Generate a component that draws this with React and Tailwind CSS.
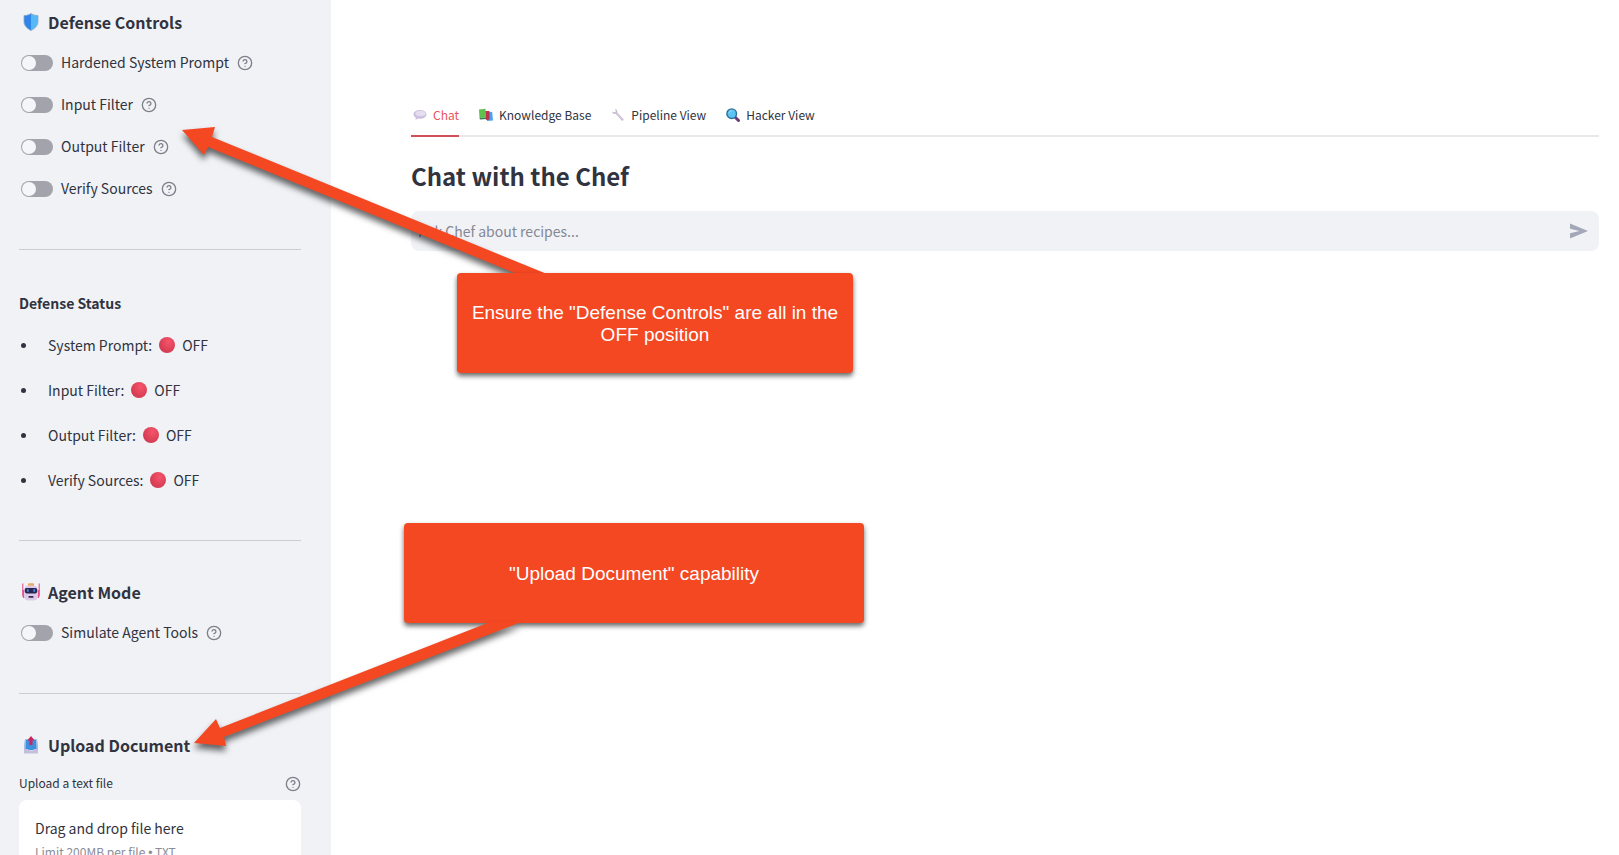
import React, { useState } from 'react';
import { CircleHelp } from 'lucide-react';

const defenses = [
  { id: 'prompt', label: 'Hardened System Prompt', status: 'System Prompt' },
  { id: 'input', label: 'Input Filter', status: 'Input Filter' },
  { id: 'output', label: 'Output Filter', status: 'Output Filter' },
  { id: 'sources', label: 'Verify Sources', status: 'Verify Sources' },
];

const ShieldIcon = () => (
  <svg width="16" height="18" viewBox="0 0 16 18" aria-hidden="true">
    <path d="M8 0.5C6 2 3.500 2.500 1 2.500v6c0 4 3 7 7 9z" fill="#2f86e8" />
    <path d="M8 0.500c2 1.500 4.500 2 7 2v6c0 4-3 7-7 9z" fill="#55b9f8" />
    <path d="M8 0.500C6 2 3.500 2.500 1 2.500v6c0 4 3 7 7 9 4-2 7-5 7-9v-6c-2.500 0-5-.500-7-2z" fill="none" stroke="#8aa6c4" strokeWidth="0.800" />
  </svg>
);

const RobotIcon = () => (
  <svg width="18" height="18" viewBox="0 0 18 18" aria-hidden="true">
    <path d="M0.800 0.500v13M17.200 0.500v13" stroke="#e0457f" strokeWidth="1" />
    <path d="M0.500 7h2v8h-1.500zM15.500 7h2l-.500 8h-1.500z" fill="#e8528c" />
    <rect x="6" y="0.300" width="6" height="3" rx="1" fill="#eda85a" />
    <rect x="2" y="2.500" width="14" height="15" rx="4.500" fill="#dccbe8" />
    <rect x="2.800" y="5" width="12.400" height="5.400" rx="1.800" fill="#2b2450" />
    <rect x="4.800" y="6" width="2" height="3" rx="1" fill="#3f83e0" />
    <rect x="11.200" y="6" width="2" height="3" rx="1" fill="#3f83e0" />
    <rect x="6.500" y="13" width="5" height="1.800" rx="0.600" fill="#3b2b52" />
  </svg>
);

const OutboxIcon = () => (
  <svg width="16" height="18" viewBox="0 0 16 18" aria-hidden="true">
    <path d="M2 3.500h12l1 10.500H1z" fill="#3d8fe0" />
    <path d="M2 3.500h1l-.500 10H1zM13 3.500h1l1 10h-1.500z" fill="#b5c3e4" />
    <path d="M1 13h4l1.500 1.500h3L11 13h4v4.500H1z" fill="#c3bedb" />
    <path d="M8 0l3.800 4.500H9.500V9h-3V4.500H4.200z" fill="#c9285f" />
  </svg>
);

const SpeechIcon = () => (
  <svg width="14" height="14" viewBox="0 0 14 14" aria-hidden="true">
    <path d="M7 2c3.800 0 6.500 1.800 6.500 4.300S10.800 10.800 7 10.800c-.700 0-1.400 0-2-.200L2.500 12l.300-2.200C1.300 9 .500 7.700.500 6.300.500 3.800 3.200 2 7 2z" fill="#cdc0de" />
    <ellipse cx="7.500" cy="5.500" rx="5" ry="2.800" fill="#e6def0" />
  </svg>
);

const BooksIcon = () => (
  <svg width="14" height="14" viewBox="0 0 14 14" aria-hidden="true">
    <path d="M7.500 4h5.700l.800 8.500-6 .500z" fill="#4fa3ee" />
    <path d="M6 3h4.500v8.500L7 12z" fill="#c2304f" />
    <path d="M0 1.500L6.500.800l.500 8.700-6.500.500z" fill="#5fc24e" />
    <path d="M.500 10L7 9.500l.500 1.500-6.500.500z" fill="#3a7a54" />
  </svg>
);

const WrenchIcon = () => (
  <svg width="14" height="14" viewBox="0 0 14 14" aria-hidden="true">
    <path d="M1 3.200c.200 2 1.900 3.200 3.600 2.600l6 6.600c1.300 1 2.600-.300 1.600-1.600L6.300 4.600C6.800 2.700 5.500 1 3.700 1l1.300 2-1 1.300L1.700 4z" fill="#c8bcd2" />
    <path d="M6 5.500l5 5.500" stroke="#e4dcea" strokeWidth="0.800" />
  </svg>
);

const SearchIcon = () => (
  <svg width="14" height="14" viewBox="0 0 14 14" aria-hidden="true">
    <path d="M9.500 9.500l3 3" stroke="#6b3b78" strokeWidth="3" strokeLinecap="round" />
    <circle cx="5.700" cy="5.700" r="4.800" fill="#5cc5f5" stroke="#2d6f96" strokeWidth="1.400" />
    <path d="M3 5c.500-1.300 1.300-2 2.500-2.200" stroke="#a5e4ff" strokeWidth="1" fill="none" />
  </svg>
);

const tabs = [
  { id: 'chat', label: 'Chat', icon: SpeechIcon },
  { id: 'kb', label: 'Knowledge Base', icon: BooksIcon },
  { id: 'pipeline', label: 'Pipeline View', icon: WrenchIcon },
  { id: 'hacker', label: 'Hacker View', icon: SearchIcon },
];

const HelpButton = ({ topic }) => (
  <button type="button" aria-label={`Help: ${topic}`} className="flex text-[#7d808b]">
    <CircleHelp size={16} />
  </button>
);

const Toggle = ({ id, label, checked, onChange }) => (
  <div className="flex h-[22px] items-center gap-2 pl-[2px]">
    <label htmlFor={id} className="flex items-center gap-2">
      <input
        id={id}
        type="checkbox"
        role="switch"
        checked={checked}
        onChange={onChange}
        className="peer sr-only"
      />
      <span className="flex h-4 w-8 items-center rounded-full bg-[#a3a4ab] px-px peer-checked:justify-end peer-checked:bg-[#ff4b4b]">
        <span className="size-[14px] rounded-full bg-[#f5f6f9]" />
      </span>
      <span className="pb-[2px]">{label}</span>
    </label>
    <HelpButton topic={label} />
  </div>
);

const SectionTitle = ({ icon: Icon, children }) => (
  <h2 className="flex h-6 items-center gap-[5px] text-[16px] font-bold">
    <span className="flex w-6 justify-center">
      <Icon />
    </span>
    {children}
  </h2>
);

const Divider = () => <hr className="border-t border-[#cccdd4]" />;

const Sidebar = ({ enabled, toggle }) => (
  <aside className="w-[331px] shrink-0 overflow-hidden bg-[#f0f2f6] pt-[10px] pr-[30px] pl-[19px]">
    <SectionTitle icon={ShieldIcon}>Defense Controls</SectionTitle>
    <div className="mt-[18px] mb-[49px] flex flex-col gap-5">
      {defenses.map((d) => (
        <Toggle key={d.id} id={d.id} label={d.label} checked={!!enabled[d.id]} onChange={() => toggle(d.id)} />
      ))}
    </div>
    <Divider />
    <h3 className="mt-[42px] text-[14px] leading-[22px] font-bold">Defense Status</h3>
    <ul className="mt-5 mb-[49px] flex flex-col gap-[23px]">
      {defenses.map((d) => (
        <li key={d.id} className="flex h-[22px] items-center">
          <span className="mr-[22px] ml-[2px] size-[5px] rounded-full bg-[#31333f]" />
          <span>{d.status}:</span>
          <span className="mx-[7px] size-4 rounded-full bg-radial-[at_60%_30%] from-[#f7546b] to-[#c43248]" />
          <span>{enabled[d.id] ? 'ON' : 'OFF'}</span>
        </li>
      ))}
    </ul>
    <Divider />
    <div className="mt-[39px] mb-[49px]">
      <SectionTitle icon={RobotIcon}>Agent Mode</SectionTitle>
      <div className="mt-[18px]">
        <Toggle id="agent" label="Simulate Agent Tools" checked={!!enabled.agent} onChange={() => toggle('agent')} />
      </div>
    </div>
    <Divider />
    <div className="mt-[39px]">
      <SectionTitle icon={OutboxIcon}>Upload Document</SectionTitle>
      <div className="mt-4 mb-[5px] flex h-[22px] items-center justify-between">
        <label htmlFor="upload" className="pb-[2px] text-[12px]">Upload a text file</label>
        <HelpButton topic="Upload a text file" />
      </div>
      <label htmlFor="upload" className="block rounded-lg bg-white p-4">
        <span className="block leading-6">Drag and drop file here</span>
        <span className="block text-[12px] leading-6 text-[#8b8d98]">
          Limit 200MB per file <span className="font-['Liberation_Sans',sans-serif]">•</span> TXT
        </span>
        <input id="upload" type="file" accept=".txt" className="sr-only" />
      </label>
    </div>
  </aside>
);

// Arrow outlines, from the tip round the head and down the shaft
const arrows = [
  '182,130 215,127 212,137 547,274 517,274 208,147 204,155',
  '194,743 216,719 220,728 490,622 521,622 224,737 226,746',
];

const Annotations = () => (
  <div className="pointer-events-none absolute inset-0 overflow-hidden font-['Liberation_Sans',sans-serif] text-[19px] leading-[22px] text-white">
    <div className="absolute top-[523px] left-[404px] flex h-[100px] w-[460px] items-center justify-center rounded-[4px] bg-[#f44823] px-3 pt-[2px] text-center shadow-[0_3px_5px_rgba(0,0,0,0.6)]">
      "Upload Document" capability
    </div>
    <svg width="600" height="800" className="absolute top-0 left-0 drop-shadow-[0_5px_3px_rgba(0,0,0,0.6)]" aria-hidden="true">
      {arrows.map((points) => (
        <polygon key={points} points={points} fill="#f44823" />
      ))}
    </svg>
    <div className="absolute top-[273px] left-[457px] flex h-[100px] w-[396px] items-center justify-center rounded-[4px] bg-[#f44823] px-3 pt-[2px] text-center shadow-[0_3px_5px_rgba(0,0,0,0.6)]">
      Ensure the "Defense Controls" are all in the OFF position
    </div>
  </div>
);

const App = () => {
  const [enabled, setEnabled] = useState({});
  const [activeTab, setActiveTab] = useState('chat');
  const [message, setMessage] = useState('');

  const toggle = (id) => setEnabled((prev) => ({ ...prev, [id]: !prev[id] }));

  return (
    <div className="relative flex h-screen overflow-hidden bg-white font-['Noto_Sans_CJK_SC','Noto_Sans',sans-serif] text-[14px] text-[#31333f]">
      <Sidebar enabled={enabled} toggle={toggle} />
      <main className="min-w-0 flex-1 pt-[95px] pr-5 pl-20">
        <div role="tablist" className="flex h-[42px] gap-[18px] border-b-2 border-[#e8e8ea] text-[12px]">
          {tabs.map(({ id, label, icon: Icon }) => (
            <button
              key={id}
              type="button"
              role="tab"
              aria-selected={activeTab === id}
              onClick={() => setActiveTab(id)}
              className="-mb-[2px] flex items-center gap-[6px] border-b-2 border-transparent pl-[2px] aria-selected:border-[#cf5055] aria-selected:text-[#e8535a]"
            >
              <Icon />
              {label}
            </button>
          ))}
        </div>
        <h1 className="mt-[22px] text-[24px] leading-[34px] font-bold">Chat with the Chef</h1>
        <form
          onSubmit={(e) => {
            e.preventDefault();
            setMessage('');
          }}
          className="mt-[18px] flex h-10 items-center rounded-lg bg-[#f0f2f6] pr-[11px] pl-2"
        >
          <input
            type="text"
            value={message}
            onChange={(e) => setMessage(e.target.value)}
            placeholder="Ask Chef about recipes..."
            aria-label="Message"
            className="min-w-0 flex-1 bg-transparent placeholder:text-[#858894] focus:outline-none"
          />
          <button type="submit" aria-label="Send" className="text-[#a3a8b8]">
            <svg width="18" height="16" viewBox="0 0 18 16" fill="currentColor">
              <path d="M0 0.500L18 8 0 15.500V10.200L9.500 8 0 5.800z" />
            </svg>
          </button>
        </form>
      </main>
      <Annotations />
    </div>
  );
};

export default App;
